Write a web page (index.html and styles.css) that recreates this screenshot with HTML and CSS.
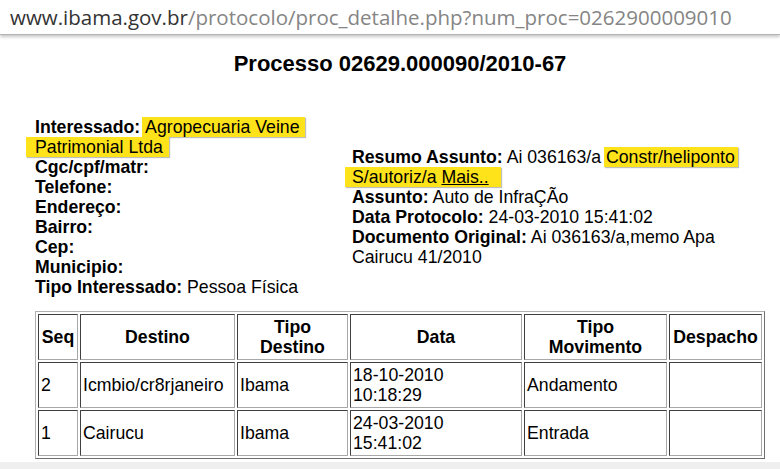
FILE: index.html
```html
<!DOCTYPE html>
<html lang="pt-BR">
<head>
<meta charset="utf-8">
<title>Processo 02629.000090/2010-67</title>
<link rel="stylesheet" href="styles.css">
</head>
<body>
<div class="sheet">
  <div class="urlbar"><span class="host">www.ibama.gov.br</span><span class="path">/protocolo/proc_detalhe.php?num_proc=0262900009010</span></div>
  <main class="page">
    <h1 class="title">Processo 02629.000090/2010-67</h1>
    <div class="info">
      <div class="col col-left">
        <div><b>Interessado:</b> <span class="hl hl-a">Agropecuaria Veine</span></div>
        <div><span class="hl hl-b">Patrimonial Ltda</span></div>
        <div><b>Cgc/cpf/matr:</b></div>
        <div><b>Telefone:</b></div>
        <div><b>Endereço:</b></div>
        <div><b>Bairro:</b></div>
        <div><b>Cep:</b></div>
        <div><b>Municipio:</b></div>
        <div><b>Tipo Interessado:</b> Pessoa Física</div>
      </div>
      <div class="col col-right">
        <div><b>Resumo Assunto:</b> Ai 036163/a <span class="hl hl-c">Constr/heliponto</span></div>
        <div><span class="hl hl-d">S/autoriz/a <a class="more" href="#">Mais..</a></span></div>
        <div><b>Assunto:</b> Auto de InfraÇÃo</div>
        <div><b>Data Protocolo:</b> 24-03-2010 15:41:02</div>
        <div><b>Documento Original:</b> Ai 036163/a,memo Apa</div>
        <div>Cairucu 41/2010</div>
      </div>
    </div>
    <table class="moves">
      <colgroup>
        <col class="c-seq">
        <col class="c-dest">
        <col class="c-tdest">
        <col class="c-data">
        <col class="c-tmov">
        <col class="c-desp">
      </colgroup>
      <thead>
        <tr>
          <th>Seq</th>
          <th>Destino</th>
          <th>Tipo<br>Destino</th>
          <th>Data</th>
          <th>Tipo<br>Movimento</th>
          <th>Despacho</th>
        </tr>
      </thead>
      <tbody>
        <tr>
          <td>2</td>
          <td>Icmbio/cr8rjaneiro</td>
          <td>Ibama</td>
          <td>18-10-2010<br>10:18:29</td>
          <td>Andamento</td>
          <td></td>
        </tr>
        <tr>
          <td>1</td>
          <td>Cairucu</td>
          <td>Ibama</td>
          <td>24-03-2010<br>15:41:02</td>
          <td>Entrada</td>
          <td></td>
        </tr>
      </tbody>
    </table>
  </main>
</div>
</body>
</html>
```

FILE: styles.css
```css
html {
  background: #efefef;
}
body {
  margin: 0;
  font-family: "Liberation Sans", Arial, sans-serif;
  color: #000;
}
.sheet {
  background: #fff;
  padding-bottom: 3px;
}
.urlbar {
  height: 34px;
  line-height: 34px;
  padding-left: 10px;
  font-family: "Open Sans", "DejaVu Sans", sans-serif;
  font-size: 20.5px;
  white-space: nowrap;
  border-bottom: 1px solid #b4b4b4;
  box-shadow: 0 2px 3px rgba(0, 0, 0, 0.22);
  position: relative;
}
.host {
  color: #333;
}
.path {
  color: #858585;
}
.page {
  width: 730px;
  margin-left: 35px;
  font-size: 17.7px;
  line-height: 20px;
}
.title {
  margin: 16px 0 0;
  text-align: center;
  font-size: 22px;
  line-height: 26px;
  font-weight: bold;
}
.info {
  display: flex;
  align-items: center;
  margin-top: 40px;
}
.col-left {
  width: 317px;
}
.col-right {
  flex: 1;
}
.hl {
  background: #ffe31a;
  box-shadow: 1px 1px 1px rgba(0, 0, 0, 0.25);
}
.hl-a {
  padding: 0 5px 0 3px;
  margin-left: -3px;
}
.hl-b {
  padding: 0 6px 0 9px;
  margin-left: -9px;
}
.hl-c {
  padding: 0 3px 0 2px;
  margin-left: -2px;
}
.hl-d {
  padding: 0 12px 0 7px;
  margin-left: -7px;
}
.more {
  color: #000;
  text-decoration: underline;
}
.moves {
  margin-top: 14px;
  width: 730px;
  table-layout: fixed;
  border-collapse: separate;
  border-spacing: 2px;
  border: 1px solid;
  border-color: #b0b0b0 #707070 #707070 #b0b0b0;
}
.c-seq { width: 40px; }
.c-dest { width: 155px; }
.c-tdest { width: 111px; }
.c-data { width: 172px; }
.c-tmov { width: 143px; }
.c-desp { width: 93px; }
.moves th,
.moves td {
  border: 1px solid;
  border-color: #404040 #a8a8a8 #a8a8a8 #404040;
  padding: 2px 2px;
  vertical-align: middle;
  line-height: 20px;
  height: 40px;
  overflow: hidden;
  white-space: nowrap;
}
.moves th {
  font-weight: bold;
  text-align: center;
}
.moves td {
  text-align: left;
}
```
